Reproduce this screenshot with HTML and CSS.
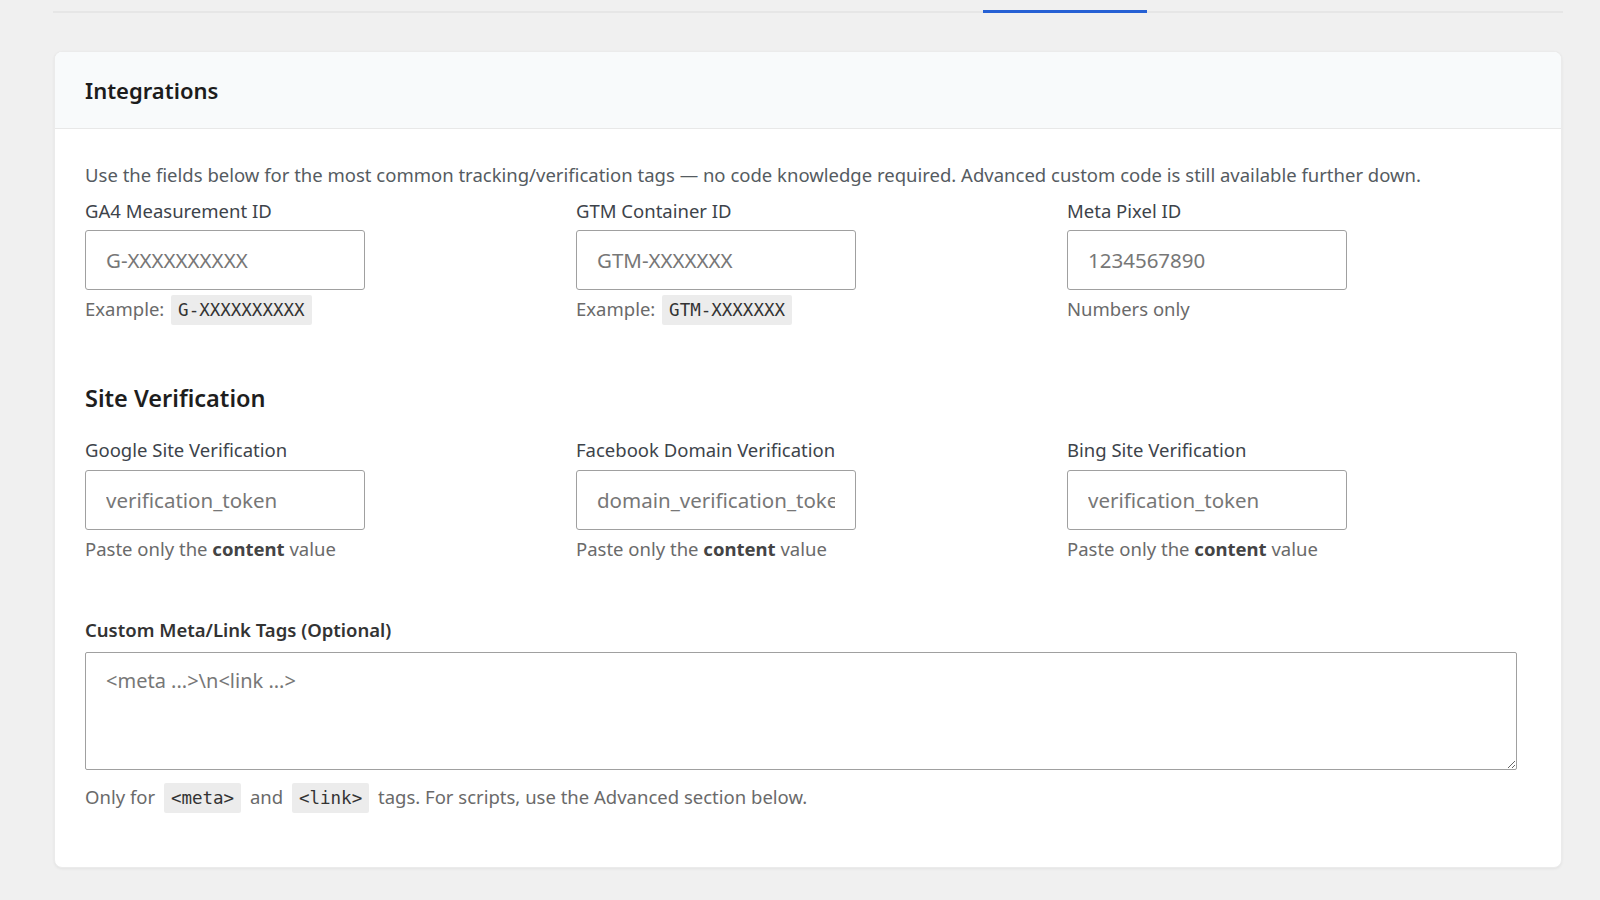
FILE: index.html
```html
<!DOCTYPE html>
<html>
<head>
<meta charset="utf-8">
<link rel="stylesheet" href="styles.css">
</head>
<body>
<div class="tabs"><span class="tab-active"></span></div>
<section class="card">
  <header class="card-header"><h2>Integrations</h2></header>
  <div class="card-body">
    <p class="intro">Use the fields below for the most common tracking/verification tags — no code knowledge required. Advanced custom code is still available further down.</p>
    <div class="grid first">
      <div class="field">
        <label>GA4 Measurement ID</label>
        <input type="text" placeholder="G-XXXXXXXXXX">
        <div class="help">Example: <code>G-XXXXXXXXXX</code></div>
      </div>
      <div class="field">
        <label>GTM Container ID</label>
        <input type="text" placeholder="GTM-XXXXXXX">
        <div class="help">Example: <code>GTM-XXXXXXX</code></div>
      </div>
      <div class="field">
        <label>Meta Pixel ID</label>
        <input type="text" placeholder="1234567890">
        <div class="help">Numbers only</div>
      </div>
    </div>

    <h3 class="section-title">Site Verification</h3>
    <div class="grid second">
      <div class="field">
        <label>Google Site Verification</label>
        <input type="text" placeholder="verification_token">
        <div class="help">Paste only the <strong>content</strong> value</div>
      </div>
      <div class="field">
        <label>Facebook Domain Verification</label>
        <input type="text" placeholder="domain_verification_token">
        <div class="help">Paste only the <strong>content</strong> value</div>
      </div>
      <div class="field">
        <label>Bing Site Verification</label>
        <input type="text" placeholder="verification_token">
        <div class="help">Paste only the <strong>content</strong> value</div>
      </div>
    </div>

    <div class="custom">
      <label class="strong-label">Custom Meta/Link Tags (Optional)</label>
      <textarea placeholder="<meta ...>\n<link ...>"></textarea>
      <div class="help">Only for <code>&lt;meta&gt;</code> and <code>&lt;link&gt;</code> tags. For scripts, use the Advanced section below.</div>
    </div>
  </div>
</section>
</body>
</html>
```
FILE: styles.css
```css
* { box-sizing: border-box; }
html, body { margin: 0; padding: 0; }
body {
  background: #f0f0f0;
  font-family: "Noto Sans", "Open Sans", sans-serif;
  color: #333;
  font-size: 18.5px;
  width: 1600px;
  height: 900px;
  overflow: hidden;
}
.tabs {
  margin: 11px 37px 0 53px;
  height: 2px;
  background: #e6e6e6;
  display: flex;
}
.tab-active {
  display: block;
  margin-left: 930px;
  margin-top: -1px;
  width: 164px;
  height: 3px;
  background: #2660d4;
}
.card {
  margin: 38px 38px 0 54px;
  background: #fff;
  border-radius: 8px;
  box-shadow: 0 1px 3px rgba(0,0,0,0.06);
  border: 1px solid #ebebeb;
  overflow: hidden;
}
.card-header {
  background: #f8fafb;
  border-bottom: 1px solid #e8e8e8;
  height: 77px;
  display: flex;
  align-items: center;
  padding: 0 30px;
}
.card-header h2 {
  margin: 0;
  font-size: 22px;
  font-weight: 600;
  color: #1c1c1c;
}
.card-body {
  padding: 32px 44px 54px 30px;
}
.intro {
  margin: 0;
  line-height: 27px;
  color: #555b61;
}
.grid {
  display: grid;
  grid-template-columns: repeat(3, 1fr);
  column-gap: 41px;
}
.grid.first { margin-top: 9px; }
.field label {
  display: block;
  line-height: 27px;
  color: #3d434a;
  margin-bottom: 6px;
}
.grid.second .field label { margin-bottom: 7px; }
.field input {
  display: block;
  width: 280px;
  height: 60px;
  border: 1px solid #a0a0a0;
  border-radius: 3px;
  padding: 0 20px;
  font: inherit;
  font-size: 20.5px;
  color: #333;
}
input::placeholder, textarea::placeholder { color: #777; opacity: 1; }
.help {
  margin-top: 4px;
  line-height: 30px;
  color: #6a6a6a;
}
.help strong { font-weight: 700; color: #444; }
code {
  font-family: "DejaVu Sans Mono", monospace;
  font-size: 17.5px;
  background: #ececec;
  color: #333;
  padding: 5px 7px;
  margin-left: 2px;
  border-radius: 2px;
}
.section-title {
  margin: 57px 0 22px;
  font-size: 23.5px;
  font-weight: 600;
  color: #1e1e1e;
  line-height: 32px;
}
.custom { margin-top: 52px; }
.strong-label {
  display: block;
  font-weight: 600;
  color: #333;
  line-height: 27px;
  margin-bottom: 9px;
}
textarea {
  display: block;
  width: 100%;
  height: 118px;
  border: 1px solid #a0a0a0;
  border-radius: 2px;
  padding: 14px 20px;
  font: inherit;
  font-size: 20px;
  resize: vertical;
}
.custom .help { margin-top: 12px; }
.custom code { margin: 0 4px; }
```
